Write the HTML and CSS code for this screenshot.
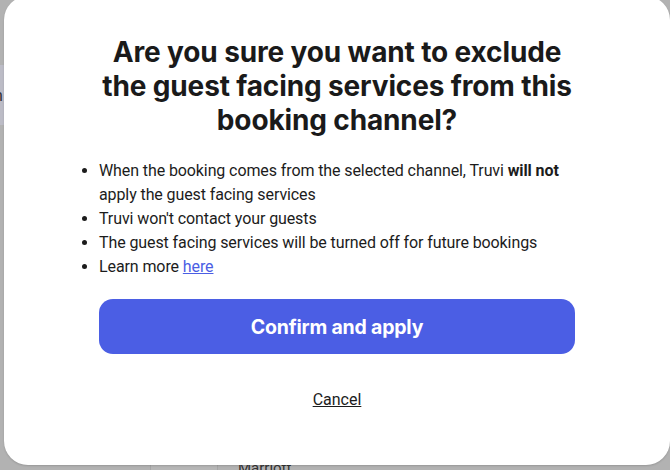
FILE: index.html
```html
<!DOCTYPE html>
<html lang="en">
<head>
<meta charset="utf-8">
<title>Exclude guest facing services</title>
<link rel="stylesheet" href="styles.css">
</head>
<body>
<div class="backdrop">
  <div class="band"><span class="frag">n</span></div>
  <div class="row"><span class="frag">r</span></div>
  <div class="table-foot">
    <div class="cell c1"></div>
    <div class="cell c2"></div>
    <div class="cell c3">Marriott</div>
  </div>
</div>
<div class="modal" role="dialog" aria-modal="true">
  <h1 class="title">Are you sure you want to exclude the guest facing services from this booking channel?</h1>
  <ul class="points">
    <li>When the booking comes from the selected channel, Truvi <strong>will not</strong> apply the guest facing services</li>
    <li>Truvi won't contact your guests</li>
    <li>The guest facing services will be turned off for future bookings</li>
    <li>Learn more <a href="#" class="link">here</a></li>
  </ul>
  <button class="confirm" type="button">Confirm and apply</button>
  <div class="cancel-wrap"><a href="#" class="cancel">Cancel</a></div>
</div>
</body>
</html>
```
FILE: styles.css
```css
html, body {
  margin: 0;
  padding: 0;
}
body {
  width: 670px;
  height: 470px;
  overflow: hidden;
  position: relative;
  background: #b2b2b2;
  font-family: Roboto, "Noto Sans", "Liberation Sans", sans-serif;
  color: #1c1c1c;
}
.backdrop {
  display: flex;
  flex-direction: column;
  height: 470px;
  padding-top: 65px;
  box-sizing: border-box;
}
.band {
  height: 60px;
  background: #bcbcc6;
  display: flex;
  align-items: center;
}
.frag {
  font-size: 16px;
  color: #333;
  margin-left: -6px;
}
.row {
  height: 30px;
  margin-top: 30px;
  display: flex;
  align-items: center;
}
.table-foot {
  margin-top: auto;
  display: flex;
  height: 12px;
}
.cell {
  height: 12px;
  border-right: 1px solid #a6a6a6;
}
.c1 { width: 150px; }
.c2 { width: 66px; background: #b6b6b6; }
.c3 {
  border-right: 0;
  padding-left: 20px;
  font-size: 15px;
  line-height: 14px;
  color: #333;
  padding-top: 3px;
  box-sizing: border-box;
}
.modal {
  position: absolute;
  left: 4px;
  top: -4px;
  width: 666px;
  height: 469px;
  box-sizing: border-box;
  background: #fff;
  border-radius: 24px;
  box-shadow: 0 1px 2px rgba(0, 0, 0, 0.15);
  padding: 39px 95px 0 95px;
  display: flex;
  flex-direction: column;
}
.title {
  margin: 0;
  font-family: Inter, "Noto Sans", sans-serif;
  font-size: 28px;
  line-height: 34px;
  font-weight: 700;
  letter-spacing: -0.005em;
  text-align: center;
  color: #1a1a1a;
}
.points {
  margin: 22px 0 0 0;
  padding: 0;
  font-size: 16px;
  line-height: 24px;
  letter-spacing: -0.1px;
}
.points strong {
  font-weight: 700;
}
.link {
  color: #4b5ee4;
  text-decoration: underline;
}
.confirm {
  margin-top: 20px;
  height: 55px;
  border: 0;
  border-radius: 14px;
  background: #4b5ee4;
  color: #fff;
  font-family: Inter, "Noto Sans", sans-serif;
  font-size: 19.5px;
  font-weight: 700;
  letter-spacing: -0.01em;
  cursor: pointer;
}
.cancel-wrap {
  margin-top: 34px;
  text-align: center;
  font-size: 16px;
  line-height: 24px;
}
.cancel {
  color: #1c1c1c;
  text-decoration: underline;
}
```
